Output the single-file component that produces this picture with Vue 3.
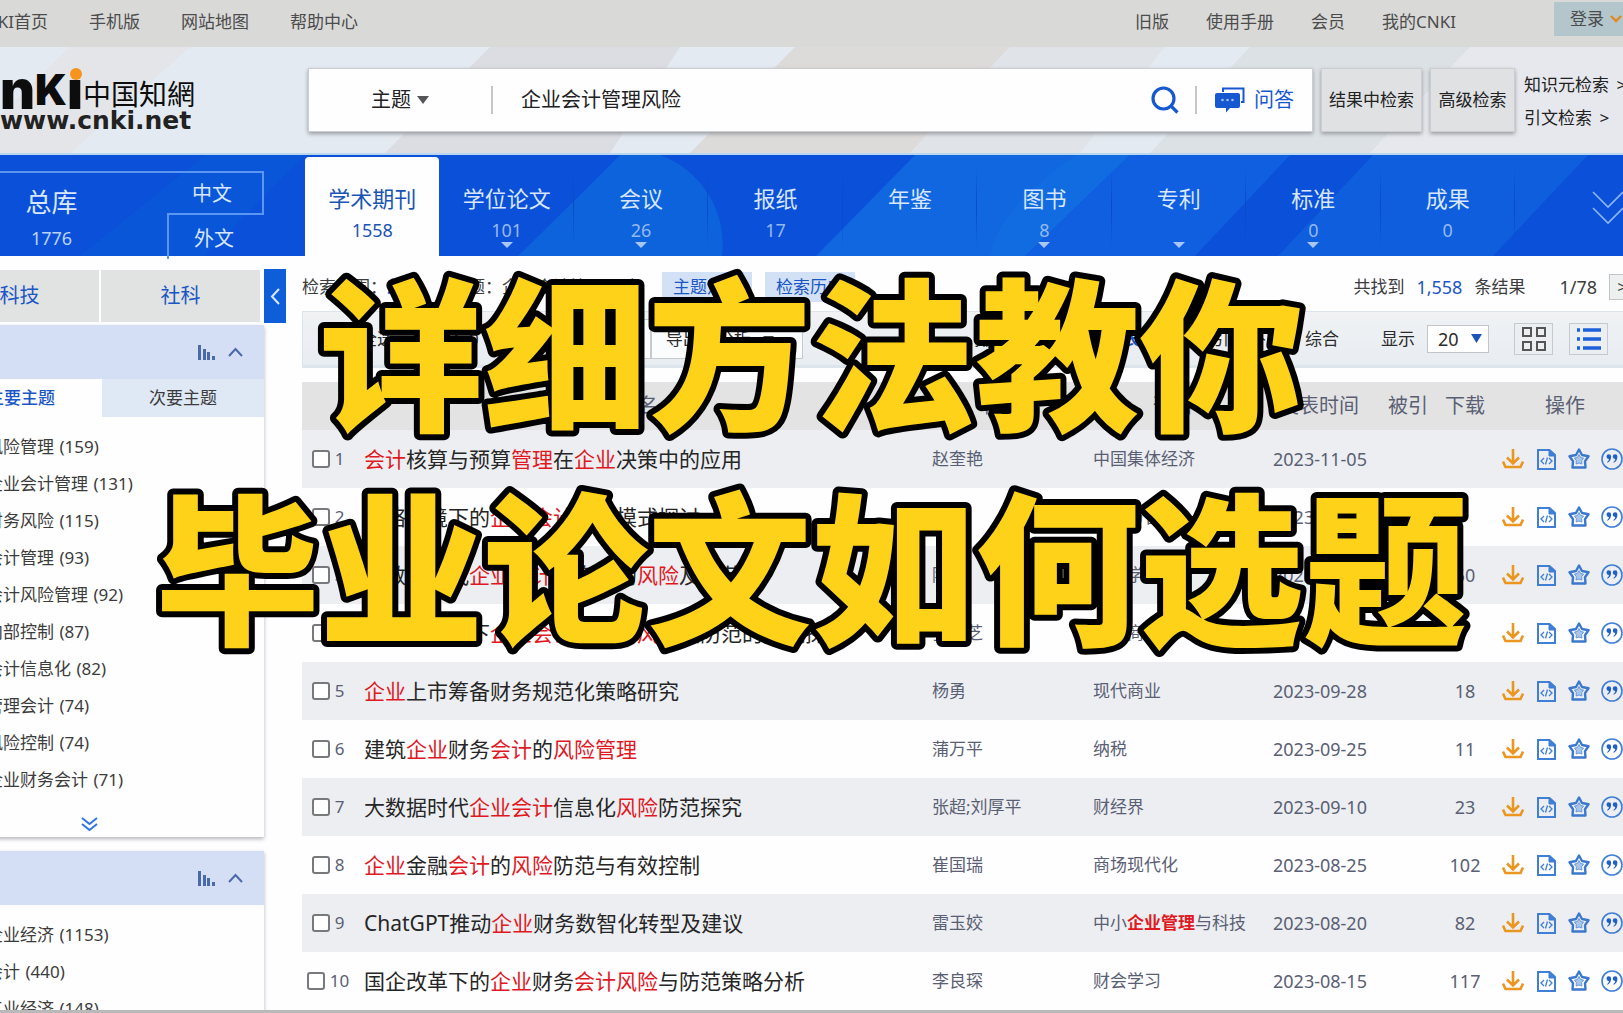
<script setup>
import { ref } from 'vue'

const leftLinks = ['CNKI首页', '手机版', '网站地图', '帮助中心']
const rightLinks = ['旧版', '使用手册', '会员', '我的CNKI']

const query = ref('企业会计管理风险')
const pageSize = ref('20')

const kinds = [
  { name: '学术期刊', count: '1558', active: true },
  { name: '学位论文', count: '101', more: true },
  { name: '会议', count: '26', more: true },
  { name: '报纸', count: '17' },
  { name: '年鉴', count: '' },
  { name: '图书', count: '8', more: true },
  { name: '专利', count: '', more: true },
  { name: '标准', count: '0', more: true },
  { name: '成果', count: '0' },
]

const topics = [
  ['风险管理', 159], ['企业会计管理', 131], ['财务风险', 115], ['会计管理', 93],
  ['会计风险管理', 92], ['内部控制', 87], ['会计信息化', 82], ['管理会计', 74],
  ['风险控制', 74], ['企业财务会计', 71],
]
const subjects = [['企业经济', 1153], ['会计', 440], ['工业经济', 148]]

// Words between asterisks are the matched keywords.
const rows = [
  ['*会计*核算与预算*管理*在*企业*决策中的应用', '赵奎艳', '中国集体经济', '2023-11-05', ''],
  ['网络环境下的*企业会计管理*模式探讨', '王丽', '商业与管理', '2023-10-25', ''],
  ['大数据时代*企业会计*信息化的*风险*及防范', '陈静', '财会学习', '2023-10-15', '50'],
  ['大数据背景下*企业会计*信息化*风险*及防范的措施探究', '张秀芝', '现代商业', '2023-10-05', ''],
  ['*企业*上市筹备财务规范化策略研究', '杨勇', '现代商业', '2023-09-28', '18'],
  ['建筑*企业*财务*会计*的*风险管理*', '蒲万平', '纳税', '2023-09-25', '11'],
  ['大数据时代*企业会计*信息化*风险*防范探究', '张超;刘厚平', '财经界', '2023-09-10', '23'],
  ['*企业*金融*会计*的*风险*防范与有效控制', '崔国瑞', '商场现代化', '2023-08-25', '102'],
  ['ChatGPT推动*企业*财务数智化转型及建议', '雷玉姣', '中小*企业管理*与科技', '2023-08-20', '82'],
  ['国企改革下的*企业*财务*会计风险*与防范策略分析', '李良琛', '财会学习', '2023-08-15', '117'],
].map(([title, author, source, date, downloads]) => ({
  title: title.split('*'), author, source: source.split('*'), date, downloads,
}))
</script>

<template>
  <div class="page">
    <header class="topbar">
      <nav class="links left">
        <a v-for="l in leftLinks" :key="l" href="#">{{ l }}</a>
      </nav>
      <nav class="links right">
        <a v-for="l in rightLinks" :key="l" href="#">{{ l }}</a>
        <button class="login" type="button">
          登录
          <svg width="12" height="8" viewBox="0 0 12 8"><path d="M1 1l5 5 5-5" fill="none" stroke="#e08a1e" stroke-width="2.4" /></svg>
        </button>
      </nav>
    </header>

    <section class="search">
      <svg class="decor" viewBox="0 0 1623 108" preserveAspectRatio="none" aria-hidden="true">
        <path d="M70 0H190L70 108H0V70z" fill="#e3e5e9" />
        <path d="M490 0H680L610 108H385z" fill="#dcdde2" />
        <path d="M795 0H1010L910 108H690z" fill="#dcdbda" />
        <path d="M1010 0H1165L1080 108H910z" fill="#e0e3e8" />
        <path d="M1250 0H1470L1370 108H1150z" fill="#dbe1e4" />
        <path d="M1470 0H1623V108H1370z" fill="#e6e8ed" />
      </svg>
      <a class="logo" href="#" aria-label="中国知网">
        <span class="mark">
          <b class="n">n</b><b class="k">K</b><b class="n i">ı</b>
          <span class="cn">中国知網</span>
        </span>
        <span class="site">www.cnki.net</span>
      </a>
      <form class="box" @submit.prevent>
        <label class="field">
          <select aria-label="检索字段"><option>主题</option></select>
          <svg width="12" height="8" viewBox="0 0 12 8"><path d="M0 0h12L6 8z" fill="#555" /></svg>
        </label>
        <span class="bar"></span>
        <input v-model="query" class="query" type="text" aria-label="检索词" />
        <button class="icon" type="submit" aria-label="检索">
          <svg width="28" height="28" viewBox="0 0 28 28" fill="none" stroke="#1558cf" stroke-width="3.2"><circle cx="12.500" cy="12.500" r="10.500" /><path d="M20 20l6.500 6.500" /></svg>
        </button>
        <span class="bar"></span>
        <button class="ask" type="button">
          <svg width="30" height="26" viewBox="0 0 30 26">
            <path d="M8 5V1.500h20.500V15H26" fill="none" stroke="#1558cf" stroke-width="2" />
            <path d="M2 6h21a2 2 0 0 1 2 2v11a2 2 0 0 1-2 2h-8l-4 4.500V21H2a2 2 0 0 1-2-2V8a2 2 0 0 1 2-2z" fill="#1558cf" />
            <g fill="#9dbcf2"><circle cx="7.500" cy="13" r="1.300" /><circle cx="12.500" cy="13" r="1.300" /><circle cx="17.500" cy="13" r="1.300" /></g>
          </svg>
          问答
        </button>
      </form>
      <button class="plain within" type="button">结果中检索</button>
      <button class="plain advanced" type="button">高级检索</button>
      <nav class="extra">
        <a href="#">知识元检索 <span>&gt;</span></a>
        <a href="#">引文检索 <span>&gt;</span></a>
      </nav>
    </section>

    <nav class="kinds">
      <svg class="decor" viewBox="0 0 1623 101" preserveAspectRatio="none" aria-hidden="true">
        <path d="M205 0H305L205 101H80z" fill="#0a56d8" />
        <path d="M620 0Q635 -6 660 0A95 95 0 0 1 722 101H518L575 45z" fill="#0c63dc" />
        <path d="M915 0H1130L1025 101H816z" fill="#1067e0" />
        <path d="M1077 0H1130L1025 101H990Q1000 50 1077 0z" fill="#126ce1" />
        <path d="M1130 0H1290L1195 101H1025z" fill="#0f5fe0" />
        <path d="M1373 0H1588L1493 101H1278z" fill="#0e5edd" />
      </svg>
      <div class="total">
        <a class="all" href="#"><span>总库</span><small>1776</small></a>
        <div class="langs"><a class="zh" href="#">中文</a><a class="en" href="#">外文</a></div>
      </div>
      <div class="tabs">
        <a v-for="k in kinds" :key="k.name" href="#" class="kind" :class="{ active: k.active }">
          <span>{{ k.name }}</span>
          <small>{{ k.count }}</small>
          <svg v-if="k.more" width="12" height="6" viewBox="0 0 12 6"><path d="M0 0h12L6 6z" fill="#a9c6f6" /></svg>
        </a>
      </div>
      <button class="expand" type="button" aria-label="展开">
        <svg width="32" height="34" viewBox="0 0 32 34" fill="none" stroke="#8db4f5" stroke-width="1.600"><path d="M1 1l15 15L31 1M1 17l15 15 15-15" /></svg>
      </button>
    </nav>

    <div class="body">
      <aside class="side">
        <div class="fields"><button type="button">科技</button><button type="button">社科</button></div>
        <section class="panel">
          <div class="head">
            <svg width="17" height="15" viewBox="0 0 17 15" fill="#4a6aa8"><path d="M0 0h3v15H0zM5 4h3v11H5zM9 7h3v8H9zM14 11h3v4h-3z" /></svg>
            <svg width="15" height="10" viewBox="0 0 15 10"><path d="M1 9l6.500-7L14 9" fill="none" stroke="#4a6aa8" stroke-width="2" /></svg>
          </div>
          <div class="subtabs"><button class="on" type="button">主要主题</button><button type="button">次要主题</button></div>
          <ul>
            <li v-for="[name, n] in topics" :key="name"><a href="#">{{ name }} <span>({{ n }})</span></a></li>
          </ul>
          <button class="more" type="button" aria-label="更多">
            <svg width="17" height="15" viewBox="0 0 17 15" fill="none" stroke="#2f74e6" stroke-width="2"><path d="M1 1l7.500 6L16 1M1 7l7.500 6L16 7" /></svg>
          </button>
        </section>
        <section class="panel">
          <div class="head">
            <svg width="17" height="15" viewBox="0 0 17 15" fill="#4a6aa8"><path d="M0 0h3v15H0zM5 4h3v11H5zM9 7h3v8H9zM14 11h3v4h-3z" /></svg>
            <svg width="15" height="10" viewBox="0 0 15 10"><path d="M1 9l6.500-7L14 9" fill="none" stroke="#4a6aa8" stroke-width="2" /></svg>
          </div>
          <ul>
            <li v-for="[name, n] in subjects" :key="name"><a href="#">{{ name }} <span>({{ n }})</span></a></li>
          </ul>
        </section>
      </aside>
      <button class="collapse" type="button" aria-label="收起">
        <svg width="10" height="17" viewBox="0 0 10 17"><path d="M9 1L2 8.500 9 16" fill="none" stroke="#dbe8ff" stroke-width="2" /></svg>
      </button>

      <main class="main">
        <div class="scope">
          <span>检索范围：</span><b>总库</b>
          <span class="cond">主题：企业会计管理风险</span>
          <div class="tags">
            <button type="button">主题定制</button>
            <button type="button">检索历史</button>
          </div>
          <span class="found">共找到</span><em>1,558</em><span>条结果</span>
          <span class="pages">1/78</span>
          <button class="next" type="button" aria-label="下一页">&gt;</button>
        </div>
        <div class="tools">
          <label class="pick"><input type="checkbox" />全选</label>
          <span class="chosen">已选：0</span>
          <button class="clear" type="button">清除</button>
          <button class="batch" type="button">批量下载</button>
          <button class="export" type="button">导出与分析
            <svg width="11" height="6" viewBox="0 0 11 6"><path d="M0 0h11L5.500 6z" fill="#444" /></svg>
          </button>
          <nav class="sort">
            <span>排序：</span><a href="#">相关度</a><a class="on" href="#">发表时间</a><a href="#">被引</a><a href="#">下载</a><a href="#">综合</a>
          </nav>
          <label class="size">显示
            <span class="pick-size">
              <select v-model="pageSize"><option>20</option></select>
              <svg width="11" height="9" viewBox="0 0 11 9"><path d="M0 0h11L5.500 9z" fill="#1a56b8" /></svg>
            </span>
          </label>
          <button class="view" type="button" aria-label="网格">
            <svg width="24" height="24" viewBox="0 0 24 24" fill="none" stroke="#555" stroke-width="2"><path d="M1 1h8v8H1zM15 1h8v8h-8zM1 15h8v8H1zM15 15h8v8h-8z" /></svg>
          </button>
          <button class="view" type="button" aria-label="列表">
            <svg width="24" height="22" viewBox="0 0 24 22" fill="none" stroke="#1c60dc" stroke-width="3.500"><path d="M0 2h3M6 2h18M0 11h3M6 11h18M0 20h3M6 20h18" /></svg>
          </button>
        </div>

        <table>
          <colgroup>
            <col class="c-no" /><col /><col class="c-author" /><col class="c-source" /><col class="c-date" /><col class="c-cited" /><col class="c-down" /><col class="c-ops" />
          </colgroup>
          <thead>
            <tr><th></th><th>篇名</th><th>作者</th><th>刊名</th><th>发表时间</th><th>被引</th><th>下载</th><th>操作</th></tr>
          </thead>
          <tbody>
            <tr v-for="(r, i) in rows" :key="i">
              <td class="no"><label><input type="checkbox" />{{ i + 1 }}</label></td>
              <td class="title"><a href="#"><span v-for="(p, j) in r.title" :key="j" :class="{ hit: j % 2 }">{{ p }}</span></a></td>
              <td class="txt">{{ r.author }}</td>
              <td class="txt"><template v-for="(p, j) in r.source" :key="j"><b v-if="j % 2" class="hit">{{ p }}</b><template v-else>{{ p }}</template></template></td>
              <td class="txt date">{{ r.date }}</td>
              <td></td>
              <td class="down">{{ r.downloads }}</td>
              <td>
                <div class="ops">
                  <button type="button" aria-label="下载"><svg width="22" height="22" viewBox="0 0 22 22" fill="none" stroke="#ea961f" stroke-width="2.600"><path d="M11 1v15M5 9.500l6 6 6-6M1 13.500l2.500 5.500h15l2.500-5.500" /></svg></button>
                  <button type="button" aria-label="阅读"><svg width="22" height="22" viewBox="0 0 22 22" fill="none" stroke="#3f7fd6" stroke-width="2"><path d="M3 2h11.500L20 7v14H3z" /><path d="M14 2v6h6z" fill="#3f7fd6" stroke-width="1" /><path d="M9 10l-3 3 3 3M14 10l3 3-3 3M12.500 9.500l-2 7" stroke-width="1.300" /></svg></button>
                  <button type="button" aria-label="收藏"><svg width="22" height="22" viewBox="0 0 22 22" fill="none" stroke="#3c78cc" stroke-linejoin="round"><path d="M11 1.500l3 5.500 6.500 1.300-3.500 4.900.5 6.300h-13l.5-6.300L1.500 8.300 8 7z" stroke-width="2.400" /><path d="M11 6.500l1.600 3 3 .6-2 2.600.3 3.300-2.900-1-2.900 1 .3-3.300-2-2.600 3-.6z" fill="#a9c5ea" stroke="#6c9bdb" /></svg></button>
                  <button type="button" aria-label="引用"><svg width="22" height="22" viewBox="0 0 22 22"><circle cx="11" cy="11" r="10" fill="none" stroke="#3f7fd6" stroke-width="1.600" /><path d="M5.500 8.500a2.300 2.300 0 1 1 4.600 0c0 3.300-1.400 5.300-3.600 6.300l-.5-.9c1.200-.8 1.800-1.700 1.900-3a2.300 2.300 0 0 1-2.400-2.400zM11.800 8.500a2.300 2.300 0 1 1 4.600 0c0 3.300-1.400 5.300-3.600 6.300l-.5-.9c1.200-.8 1.800-1.700 1.900-3a2.300 2.300 0 0 1-2.400-2.400z" fill="#1f5fca" /></svg></button>
                </div>
              </td>
            </tr>
          </tbody>
        </table>
      </main>
    </div>

    <h1 class="caption">
      <svg width="100%" height="440">
        <text x="50%" y="168">详细方法教你</text>
        <text x="50%" y="382">毕业论文如何选题</text>
      </svg>
    </h1>
  </div>
</template>

<style>
body { margin: 0; }
</style>

<style scoped>
.page {
  position: relative;
  display: flex;
  flex-direction: column;
  height: 100vh;
  box-sizing: border-box;
  overflow: hidden;
  border-bottom: 3px solid #b9b9b9;
  background: #fefdff;
  color: #3c3c3c;
  font: 17px/24px "Noto Sans", "Noto Sans CJK SC", sans-serif;
  white-space: nowrap;
}
.page * { box-sizing: border-box; }
a { color: inherit; text-decoration: none; }
button, select, input {
  margin: 0;
  padding: 0;
  border: 0;
  background: none;
  color: inherit;
  font: inherit;
}
svg { display: block; flex: none; }
select { appearance: none; }

.topbar {
  display: flex;
  justify-content: space-between;
  flex: none;
  height: 47px;
  background: #d9d9d8;
  color: #4c4c4c;
}
.links { display: flex; }
.links a { padding-top: 10px; }
.left { gap: 41px; margin-left: -26px; }
.right { gap: 37px; }
.login {
  display: flex;
  align-items: center;
  gap: 6px;
  width: 69px;
  height: 34px;
  margin: 2px 0 0 61px;
  padding-left: 16px;
  background: #b3c6cc;
}

.search {
  position: relative;
  display: flex;
  flex: none;
  height: 108px;
  padding-top: 21px;
  border-bottom: 2px solid #b9d8f0;
  background: #e3eaf1;
  color: #222;
}
.decor { position: absolute; inset: 0; width: 100%; height: 100%; }
.search > :not(.decor), .kinds > :not(.decor) { position: relative; }
.logo { width: 308px; color: #0d0d0d; }
.mark { display: flex; align-items: flex-end; height: 44px; }
.mark b { font-family: "Inter", "Liberation Sans", sans-serif; font-weight: 900; line-height: 44px; }
.n { font-size: 54px; }
.k { font-size: 42px; }
.mark .i { position: relative; }
.i::after {
  content: "";
  position: absolute;
  top: 0;
  left: 3px;
  width: 12px;
  height: 12px;
  border-radius: 50%;
  background: #f7941d;
}
.cn { font: 28px/38px "Noto Sans CJK TC", sans-serif; }
.site { display: block; font: bold 25px/18px "DejaVu Sans", sans-serif; color: #222; }
.box, .plain {
  height: 64px;
  border: 1px solid #cbcdd2;
  box-shadow: 0 2px 4px #9a9ca2;
}
.box {
  display: flex;
  flex: 1;
  align-items: center;
  padding-right: 18px;
  background: #fefdff;
  font-size: 20px;
}
.field { display: flex; align-items: center; gap: 4px; width: 182px; padding-left: 62px; }
.field select { width: 42px; }
.bar { width: 2px; height: 28px; background: #c4c6ca; }
.query { flex: 1; min-width: 0; padding-left: 28px; }
.icon { margin-right: 16px; }
.ask { display: flex; align-items: center; gap: 9px; margin-left: 18px; color: #1558cf; }
.plain { margin-left: 8px; background: #dfe1e2; }
.within { width: 101px; }
.advanced { width: 85px; }
.extra { display: flex; flex-direction: column; gap: 9px; width: 108px; padding: 5px 0 0 9px; }
.extra span { margin-left: 3px; }

.kinds {
  position: relative;
  display: flex;
  flex: none;
  height: 101px;
  background: #0b50d8;
  color: #d8e7ff;
}
.total { display: flex; width: 305px; padding-top: 16px; }
.all { display: flex; flex-direction: column; align-items: center; width: 167px; padding: 13px 64px 0 0; border-top: 2px solid #5b96f2; }
.all span { font-size: 26px; line-height: 32px; }
.all small, .kind small { font-size: 18px; line-height: 24px; height: 24px; }
.all small { margin-top: 8px; color: #b9d3fb; }
.langs { width: 97px; font-size: 20px; text-align: center; }
.langs a { display: block; height: 44px; padding-right: 5px; line-height: 42px; }
.zh { border: solid #5b96f2; border-width: 2px 2px 2px 0; }
.langs .en { border-left: 2px solid #5b96f2; line-height: 48px; }
.tabs { display: flex; flex: 1; }
.kind {
  position: relative;
  display: flex;
  flex: 1;
  flex-direction: column;
  align-items: center;
  margin-top: 2px;
  padding-top: 25px;
  font-size: 22px;
  line-height: 32px;
}
.kind + .kind { background: linear-gradient(#0a49c800, #0a49c8 50%, #0a49c800) right / 1px 80px no-repeat; }
.kind small { margin-top: 4px; color: #94b8f3; }
.active { border-radius: 4px 4px 0 0; background: #fefdff; color: #1a55b4; }
.kind.active small { color: #1a55b4; }
.expand { align-self: flex-start; width: 108px; padding: 36px 0 0 77px; }

.body { display: flex; flex: 1; align-items: flex-start; min-height: 0; overflow: hidden; }
.side { flex: none; width: 324px; margin-left: -60px; }
.fields { display: flex; gap: 2px; margin: 14px 4px 3px 0; }
.fields button { flex: 1; height: 52px; background: #e1e3e3; color: #1a56c4; font-size: 20px; }
.panel { margin-bottom: 14px; background: #fefefe; box-shadow: 0 2px 4px #b4b6ba; }
.head { display: flex; align-items: center; justify-content: flex-end; gap: 13px; height: 54px; padding-right: 21px; background: #d4dff6; }
.subtabs { display: flex; }
.subtabs button { flex: 1; height: 38px; background: #dfe8f5; }
.subtabs .on { background: none; color: #1a56c4; font-weight: 500; }
.panel ul { margin: 0; padding: 11px 0 0 46px; list-style: none; }
.panel li { height: 37px; line-height: 37px; }
.panel li span { margin-left: 1px; }
.more { display: block; margin: 19px 0 0 141px; padding-bottom: 5px; }
.collapse { display: flex; align-items: center; justify-content: center; flex: none; width: 22px; height: 54px; margin-top: 13px; background: #0f5ed9; }

.main { flex: 1; min-width: 0; margin: 16px -18px 0 16px; }
.scope { display: flex; align-items: center; height: 30px; padding-right: 18px; }
.scope b { color: #1a56c4; }
.cond { margin-left: 30px; }
.tags { display: flex; gap: 13px; margin-left: 24px; }
.tags button { height: 30px; padding: 0 11px; background: #d3e1f7; color: #1a56c4; }
.found { margin-left: auto; }
.scope em { margin: 0 12px; color: #1a56c4; font-size: 18px; font-style: normal; }
.pages { margin: 0 12px 0 34px; font-size: 18px; }
.next { width: 26px; height: 26px; margin-right: -12px; border: 1px solid #c2c4c6; background: #eef0f0; }
.tools {
  display: flex;
  align-items: center;
  height: 57px;
  margin: 9px 0 14px;
  padding-right: 32px;
  border: solid #dce4ec;
  border-width: 1px 1px 3px;
  background: linear-gradient(#f0f2f4, #e8edf2);
  color: #2b2b2b;
}
.pick { display: flex; align-items: center; gap: 22px; padding-left: 17px; }
.chosen { margin-left: 24px; }
.clear { margin-left: 20px; }
.batch, .export { height: 40px; border: 1px solid #c6cacf; background: #fbfcfd; }
.batch { margin-left: 20px; padding: 0 14px; }
.export { display: flex; align-items: center; gap: 12px; padding: 0 28px 0 14px; }
.sort { display: flex; gap: 21px; margin-left: auto; }
.sort span { margin-right: -12px; }
.sort .on { color: #1a56c4; font-weight: bold; }
.size { display: flex; align-items: center; gap: 12px; margin-left: 42px; }
.pick-size { display: flex; align-items: center; width: 62px; height: 28px; border: 1px solid #c2c6cc; background: #fff; font-size: 18px; }
.pick-size select { width: 43px; padding-left: 10px; line-height: 24px; }
.view { display: flex; align-items: center; justify-content: center; width: 39px; height: 32px; margin-left: 25px; border: 1px solid #c6cacf; background: #eceff1; }
.view + .view { margin-left: 16px; }

table { width: 100%; border-collapse: collapse; table-layout: fixed; color: #5a6073; }
.c-no { width: 52px; }
.c-author { width: 161px; }
.c-source { width: 180px; }
.c-date { width: 112px; }
.c-cited { width: 66px; }
.c-down { width: 48px; }
.c-ops { width: 152px; }
th { height: 48px; padding: 0; background: #e3e3e3; font-size: 20px; font-weight: normal; }
td { height: 58px; padding: 0; }
tbody tr:nth-child(odd) { background: #eceef2; }
.no label { display: flex; align-items: center; justify-content: center; gap: 5px; }
input[type="checkbox"] { appearance: none; flex: none; width: 18px; height: 18px; border: 2px solid #77797d; border-radius: 3px; background: #fff; }
.title { padding-left: 10px; color: #262626; font-size: 21px; line-height: 30px; }
.txt { padding-left: 10px; }
.date { font-size: 18px; }
.down { font-size: 18px; text-align: center; }
.hit { color: #e0191f; }
.ops { display: flex; gap: 11px; padding-left: 13px; }

.caption {
  position: absolute;
  top: 250px;
  left: 0;
  right: 0;
  margin: 0;
  font: 900 164px/214px "Noto Sans CJK SC", sans-serif;
  pointer-events: none;
}
.caption text {
  fill: #ffd21a;
  stroke: #000;
  stroke-width: 12px;
  stroke-linejoin: round;
  paint-order: stroke fill;
  text-anchor: middle;
}
</style>
